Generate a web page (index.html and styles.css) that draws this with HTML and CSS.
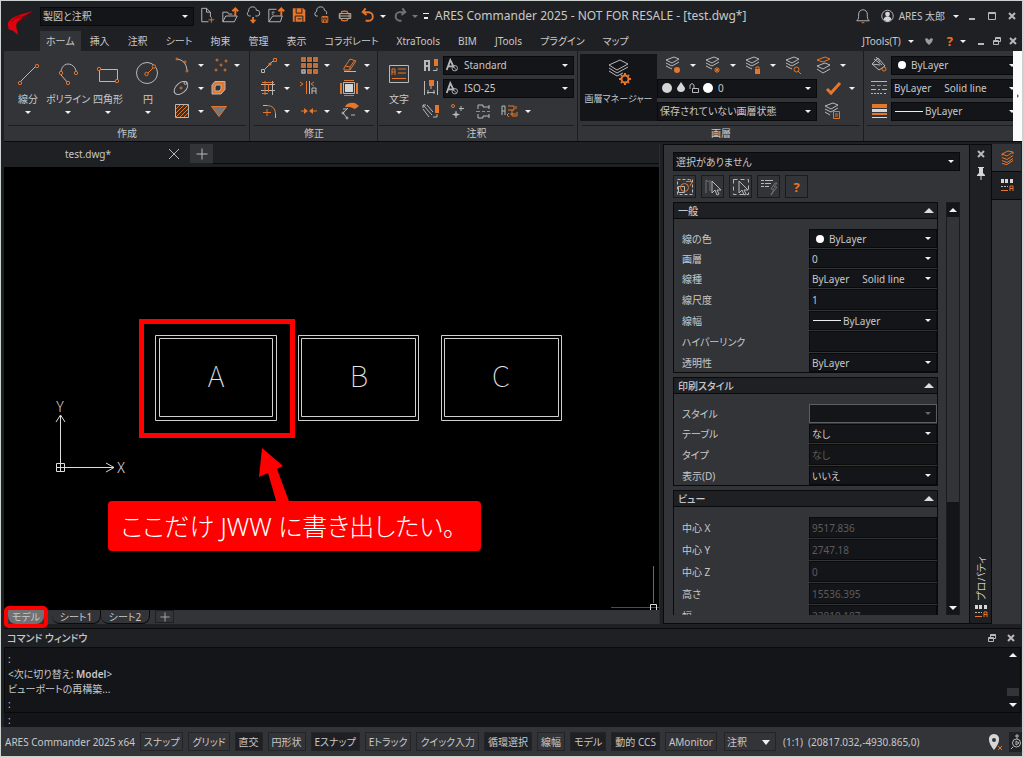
FILE: index.html
```html
<!DOCTYPE html>
<html lang="ja">
  <head>
    <meta charset="UTF-8" />
    <meta name="viewport" content="width=device-width, initial-scale=1.0" />
    <title>ARES Commander 2025</title>
    <link rel="stylesheet" href="styles.css">
  </head>
  <body>
    <!-- icon sprite -->
    <svg class="sprite" aria-hidden="true">
      <symbol id="i-new" viewBox="0 0 24 22"><path class="w" d="M15 12V7l-4-4H6v14h7M11 3v4h4"/><path class="o" d="M16 12v6M13 15h6"/></symbol>
      <symbol id="i-open" viewBox="0 0 24 22"><path class="w" d="M4 17V7h5l1 2h4M4 17h12l3-6H7l-3 6M17 11V9"/><path class="o b" d="M17 11V4M14 6l3-3 3 3"/></symbol>
      <symbol id="i-cloud" viewBox="0 0 24 22"><path class="w" d="M9 11H7a3 3 0 0 1 0-5 4 4 0 0 1 8-1 3 3 0 0 1 1 6h-2"/><path class="o b" d="M11.500 12v5"/><path class="of" d="M8 15h7l-3.500 4z"/></symbol>
      <symbol id="i-recent" viewBox="0 0 24 22"><path class="w" d="M4 17V4h8M4 17h12l2-6H8l-4 6M7 7h3M7 9h2"/><path class="o b" d="M17 11V4M14 6l3-3 3 3"/></symbol>
      <symbol id="i-save" viewBox="0 0 24 22"><path class="of" d="M5 3h11l2 2v12H5z"/><path class="d" d="M8.500 3v5h6V3M7.500 17v-6h8v6M10 14h4"/></symbol>
      <symbol id="i-cloudsave" viewBox="0 0 24 22"><path class="w" d="M7 11H5a3 3 0 0 1 1-5 4 4 0 0 1 8-1 3 3 0 0 1 2 4"/><path class="o" d="M11.500 11.500h6v6h-6zM13 11v2h3v-2M13 18v-3h3v3"/></symbol>
      <symbol id="i-print" viewBox="0 0 24 22"><circle class="o" cx="11" cy="11" r="5"/><path class="w" d="M5.500 8.500h12v5h-12zM6 11h11"/><path class="o" d="M8 8.500V6h6v2.500M8 13.500V16h6v-2.500"/></symbol>
      <symbol id="i-undo" viewBox="0 0 24 22"><path class="o b" d="M9 3L6 7l4 3M6 7h6a4 4 0 0 1 0 9H9"/></symbol>
      <symbol id="i-redo" viewBox="0 0 24 22"><path class="g b" d="M14 3l3 4-4 3M17 7h-5a4 4 0 0 0-1 9h2"/></symbol>
      <symbol id="i-bell" viewBox="0 0 24 22"><path class="w" d="M6 16c2-2 2-3 2-7a4.500 4.500 0 0 1 9 0c0 4 0 5 2 7z"/><path class="o" d="M11 18h3"/></symbol>
      <symbol id="i-user" viewBox="0 0 24 22"><circle class="w" cx="12" cy="11" r="6"/><circle class="wf" cx="12" cy="9" r="2.500"/><path class="wf" d="M8 15c0-5 8-5 8 0l-4 2z"/></symbol>
      <symbol id="i-min" viewBox="0 0 12 12"><path class="w b" d="M3 9h6"/></symbol>
      <symbol id="i-max" viewBox="0 0 12 12"><path class="w" d="M2.500 2.500h7v7h-7zM2.500 3.500h7"/></symbol>
      <symbol id="i-restore" viewBox="0 0 12 12"><path class="w" d="M2.500 5.500h5v4h-5zM4.500 5V2.500h5v4H8M4.500 3.500h5M2.500 6.500h5"/></symbol>
      <symbol id="i-x" viewBox="0 0 12 12"><path class="w b" d="M3 3l6 6M9 3L3 9"/></symbol>
      <symbol id="i-chev" viewBox="0 0 12 12"><path class="gf" d="M2 4l2-1 2 2 2-2 2 1-1 3-3 3-3-3z"/></symbol>

      <symbol id="i-line" viewBox="0 0 32 32"><path class="w" d="M8 25L24 9"/><circle class="n" cx="8" cy="26" r="1.700"/><circle class="n" cx="25" cy="9" r="1.700"/></symbol>
      <symbol id="i-poly" viewBox="0 0 32 32"><path class="w" d="M16 26l-7-8c-1-5 2-11 7-11s9 5 8 10"/><circle class="n" cx="9" cy="16" r="1.700"/><circle class="n" cx="24" cy="16" r="1.700"/><circle class="n" cx="16" cy="26" r="1.700"/></symbol>
      <symbol id="i-rect" viewBox="0 0 32 32"><path class="w" d="M7.500 12.500h18v12h-18z"/><circle class="n" cx="7" cy="12" r="1.700"/><circle class="n" cx="25" cy="24" r="1.700"/></symbol>
      <symbol id="i-circle" viewBox="0 0 32 32"><circle class="w" cx="15" cy="16" r="10.500"/><path class="o" d="M15 17l7-7"/><circle class="n" cx="14.500" cy="17" r="1.700"/><circle class="n" cx="22" cy="9.500" r="1.700"/></symbol>
      <symbol id="i-mtext" viewBox="0 0 32 32"><path class="w" d="M6.500 8.500h19v17h-19z"/><path class="o" d="M9 18v-6h3v6M9 15h3M15 12h8M15 16h8M9 21.500h14"/></symbol>
      <symbol id="i-layers-gear" viewBox="0 0 32 32"><path class="w" d="M6 8l11-5 8 4-11 6zM6 11l8 5 11-6M6 14l8 5 6-3"/><circle class="o b" cx="22" cy="22" r="3.500"/><path class="o b" d="M22 16v2M22 26v2M16 22h2M26 22h2M18 18l1 1M25 25l1 1M18 26l1-1M25 19l1-1"/></symbol>

      <symbol id="i-arc" viewBox="0 0 24 22"><path class="w" d="M7 5q9 1 10 11"/><circle class="n" cx="7" cy="5" r="1"/><circle class="n" cx="15" cy="8" r="1"/><circle class="n" cx="17" cy="17" r="1"/></symbol>
      <symbol id="i-ellipse" viewBox="0 0 24 22"><ellipse class="w" cx="11" cy="11" rx="8" ry="5" transform="rotate(-42 11 11)"/><circle class="n" cx="11" cy="11" r="1"/><circle class="w" cx="15.500" cy="6" r="1.500"/></symbol>
      <symbol id="i-hatch" viewBox="0 0 24 22"><path class="o" d="M6 9l4-4M6 13l8-8M6 17L18 5M10 17l8-8M14 17l4-4"/><path class="w" d="M5.500 4.500h13v13h-13z"/></symbol>
      <symbol id="i-points" viewBox="0 0 24 22"><circle class="n" cx="11" cy="6" r="1"/><circle class="n" cx="20" cy="7" r="1"/><circle class="n" cx="15" cy="11" r="1"/><circle class="n" cx="10" cy="16" r="1"/><circle class="n" cx="19" cy="16" r="1"/></symbol>
      <symbol id="i-region" viewBox="0 0 24 22"><path class="of" fill-rule="evenodd" d="M9 4h10v9l-4 4H6V8zM10 8L9 10v4h4l2-2V8z"/><path class="w" d="M9 4.500h10v8l-4 4.500H6V8zM10 8l-1 2v4h4l2-2V8z"/></symbol>
      <symbol id="i-wipe" viewBox="0 0 24 22"><path class="o grey" d="M5.500 6.500h15L13 16.500z"/></symbol>

      <symbol id="i-move" viewBox="0 0 24 22"><path class="w" d="M5.500 15.500h3v3h-3zM9 15l8-8"/><path class="o" d="M17.500 4.500h3v3h-3z"/><circle class="of" cx="14" cy="10" r="1.500"/></symbol>
      <symbol id="i-array" viewBox="0 0 24 22"><path fill="#77716c" d="M5 3h17v17H5z"/><path class="o" d="M6 4h3v3H6zM12 4h3v3h-3zM18 4h3v3h-3zM6 10h3v3H6zM12 10h3v3h-3zM18 10h3v3h-3zM12 16h3v3h-3zM18 16h3v3h-3z"/><path class="w" d="M6 16h3v3H6z"/><path class="d" d="M10.500 3v17M16.500 3v17M5 8.500h17M5 14.500h17"/></symbol>
      <symbol id="i-erase" viewBox="0 0 24 22"><path class="o" d="M8 14l6-9 6 2-6 9H8zM9 12l5 1 5-7M14 13v3"/><path class="w" d="M8 17.500h12"/></symbol>
      <symbol id="i-trim" viewBox="0 0 24 22"><path class="w" d="M5 7.500h14M5 13.500h14M16.500 4v14"/><path class="o" d="M9 4v14M6 5.500h12M6 16.500h6M12.500 7v8"/></symbol>
      <symbol id="i-mirror" viewBox="0 0 24 22"><path class="o" d="M4 5l3 2-3 2M10.500 4v13M18 5l-3 2 3 2"/><path class="w" d="M13.500 4v13M16 17v-6h4v6M16 14h4"/></symbol>
      <symbol id="i-scale" viewBox="0 0 24 22"><path class="wf" d="M9 7h8v8H9z"/><path class="o b" d="M5 6v11M21 6v11"/><path class="o" d="M8 3.500h10M8 18.500h10"/><path class="w" d="M7.500 5.500h11v11h-11z"/></symbol>
      <symbol id="i-fillet" viewBox="0 0 24 22"><path class="w" d="M7 5.500h4M19.500 13v5"/><path class="o" d="M11 5.500q8 0 8.500 8M7 12.500h8M11 9v7"/></symbol>
      <symbol id="i-join" viewBox="0 0 24 22"><path class="o" d="M5 11h5M15 11h6"/><path class="of" d="M8 8l4 3-4 3zM17 8l-4 3 4 3z"/></symbol>
      <symbol id="i-explode" viewBox="0 0 24 22"><path class="of" d="M9 7q2-5 10-4l4 3-4 3-5-2z"/><path class="w" d="M12 8l-5 5 4 5M15 15h4M7 9h4"/><circle class="w" cx="7" cy="13" r="1"/><circle class="w" cx="11" cy="18" r="1"/></symbol>

      <symbol id="i-tstyle" viewBox="0 0 24 22"><path class="w b" d="M6 17V7h4v10M6 12h4"/><path class="of" d="M15 5h4v7h-4z"/><path class="w" d="M14 16.500h4V14"/></symbol>
      <symbol id="i-dimstyle" viewBox="0 0 24 22"><path class="of" d="M10 3h5v6h-5z"/><path class="w" d="M5.500 4v14M18.500 4v14M8 15.500h8M9 13v4M15 13v4M12 9v3"/></symbol>
      <symbol id="i-leader" viewBox="0 0 24 22"><path class="w" d="M4 5l9 10M8 5l6 7M4 9l6 8M4 5h3M4 5v3"/><path class="of" d="M16 5h4v8h-4z"/><path class="w" d="M14 17h4v-3"/></symbol>
      <symbol id="i-center" viewBox="0 0 24 22"><circle class="n" cx="8" cy="6" r="1.500"/><path class="w" d="M16 6v5M14 8.500h5M11 11v7M7.500 14.500h7"/><circle class="w" cx="11" cy="14.500" r="1.500"/></symbol>
      <symbol id="i-break" viewBox="0 0 24 22"><path class="w" d="M7 9V5h5v2h6V5M7 14v4h5v-2h6v2M18 9V7M18 14v2"/><path class="o" d="M5 11.500h4M11 11.500h3M16 11.500h3"/></symbol>
      <symbol id="i-annot" viewBox="0 0 24 22"><path class="w" d="M5 15V6h3v9M5 11h3"/><path class="o" d="M11 6h6v4h-6M13 14h6M19 6v3M15 10v6h5v-4M12 13l-2 2 2 2"/></symbol>
      <symbol id="i-astyle" viewBox="0 0 20 16"><path class="w b" d="M3 13L7 2l4 8M5 9h4"/><circle class="w" cx="12" cy="11" r="3"/><path class="w" d="M10 9l4 4"/></symbol>

      <symbol id="i-ly-dot" viewBox="0 0 24 22"><path class="w" d="M4 6l8-3 5 2-7 4zM4 9l6 3 7-4M4 12l6 3"/><circle class="of" cx="15" cy="16" r="3"/></symbol>
      <symbol id="i-ly-freeze" viewBox="0 0 24 22"><path class="w" d="M4 6l8-3 5 2-7 4zM4 9l6 3 7-4M4 12l6 3"/><path class="o" d="M15 13v6M12 16h6M13 14l4 4M17 14l-4 4"/></symbol>
      <symbol id="i-ly-lock" viewBox="0 0 24 22"><path class="w" d="M4 6l8-3 5 2-7 4zM4 9l6 3 7-4M4 12l6 3"/><path class="of" d="M13 15h5v5h-5z"/><path class="o" d="M14 15v-2h3v2"/></symbol>
      <symbol id="i-ly-find" viewBox="0 0 24 22"><path class="w" d="M4 6l8-3 5 2-7 4zM4 9l6 3 7-4M4 12l6 3"/><circle class="o" cx="14.500" cy="15.500" r="2.500"/><path class="o" d="M16 17l3 3"/></symbol>
      <symbol id="i-ly-swap" viewBox="0 0 24 22"><path class="o" d="M5 6l8-3 5 2-7 3z"/><path class="w" d="M5 12l8-3 5 2-7 4zM5 15l6 4 7-4"/></symbol>
      <symbol id="i-check" viewBox="0 0 24 22"><path class="o bb" d="M6 12l4 4 9-10"/></symbol>
      <symbol id="i-ly-list" viewBox="0 0 24 22"><path class="w" d="M4 6l8-3 5 2-7 4zM4 9l6 3 7-4M4 12l5 3"/><path class="o" d="M12.500 11.500h6v7h-6zM14 14h3M14 16h3"/></symbol>
      <symbol id="i-paint" viewBox="0 0 24 22"><path class="w" d="M5 10l6-6 7 8-6 4zM5 10l8 1M9 3l4 5M7 5l8 6"/><circle class="o" cx="17" cy="15" r="2"/></symbol>
      <symbol id="i-ltype" viewBox="0 0 24 22"><path class="w" d="M4 4.500h16M4 12.500h5M11 12.500h2M15 12.500h5M4 16.500h2M7 16.500h2M10 16.500h2M13 16.500h2M17 16.500h2"/><path class="o" d="M4 8.500h4M10 8.500h4M16 8.500h4"/></symbol>
      <symbol id="i-lweight" viewBox="0 0 24 22"><path class="of" d="M5 4h15v4H5zM5 13h15v2H5z"/><path class="wf" d="M5 9h15v3H5zM5 17h15v1H5z"/></symbol>

      <symbol id="i-p-sel" viewBox="0 0 22 22"><path class="w" stroke-dasharray="3 2" d="M3.500 3.500h15v15h-15z"/><path class="w" d="M4.500 10.500h6v6h-6z"/><circle class="o" cx="10.500" cy="11.500" r="4"/><path class="o" d="M12 5.500h5M15 3l3 3-2 4"/></symbol>
      <symbol id="i-p-cursor" viewBox="0 0 22 22"><path class="g" d="M4 17V4l3 2M8 15V4"/><path class="w" d="M10 5v12l3-3 2 5 2-1-2-4h4z"/></symbol>
      <symbol id="i-p-window" viewBox="0 0 22 22"><path class="w" stroke-dasharray="4 3" d="M3.500 3.500h15v15h-15z"/><path class="w solid" d="M9 5v12l3-3 2 5 2-1-2-4h4z"/></symbol>
      <symbol id="i-p-quick" viewBox="0 0 22 22"><path class="w" d="M3 4.500h3M7 4.500h8M3 7.500h3M7 7.500h6M3 10.500h3M7 10.500h4"/><path class="g" d="M17 7l-4 6h3l-3 6 6-8h-3l3-4z"/></symbol>
      <symbol id="i-pin" viewBox="0 0 12 16"><path class="wf" d="M3 2h6v1H8v5l2 2v1H2v-1l2-2V3H3zM5.500 11h1v4h-1z"/></symbol>
      <symbol id="i-dock-layers" viewBox="0 0 22 22"><path class="o" d="M6 7l6-3 5 1-6 4zM6 10.500l5 2 6-4M6 7v1.500M17 5v2M6 13.500l5 2 6-4M6 16.500l5 1 6-4"/></symbol>
      <symbol id="i-dock-props" viewBox="0 0 22 22"><path class="wf" d="M5 4h3v4H5zM9 4h3v4H9zM14 4h3v4h-3z"/><path class="w" d="M5 11.500h2M8 11.500h2M11 11.500h1"/><path class="o" d="M5 15.500h7M14 16v-5h3v5M14 13.500h3"/></symbol>
      <symbol id="i-place" viewBox="0 0 20 20"><path class="wf" fill-rule="evenodd" d="M9 2a5 5 0 0 0-5 6c0 4 5 10 5 10s5-6 5-10a5 5 0 0 0-5-6zM9 6a2 2 0 1 1 0 4 2 2 0 0 1 0-4z"/><path class="o" d="M13 14l4 4M17 14l-4 4"/></symbol>
      <symbol id="i-gauge" viewBox="0 0 13 20"><circle class="w" cx="7.500" cy="11" r="4"/><path class="w" d="M8 2v5M6 4h4M7 13V9l3 2-3 2M4 15l-2 2"/></symbol>
      <symbol id="i-plus" viewBox="0 0 12 12"><path class="w" d="M6 .500v11M.500 6h11"/></symbol>
    </svg>

    <header class="top">
      <svg class="logo" viewBox="0 0 28 28"><path fill="#e00010" d="M28 1L14 5C4 8 0 13 1 17l1 4 4 1 6 5-2-9c-1-5 6-10 18-17z"/><path stroke="#7c0008" fill="none" d="M26 3L13 9M23 7L10 14M14 6L5 12"/></svg>
      <div class="titlebar">
        <div class="combo workspace"><select aria-label="ワークスペース"><option>製図と注釈</option></select></div>
        <div class="quick">
          <button aria-label="新規"><svg><use href="#i-new"/></svg></button>
          <button aria-label="開く"><svg><use href="#i-open"/></svg></button>
          <button aria-label="クラウド"><svg><use href="#i-cloud"/></svg></button>
          <button aria-label="最近のファイル"><svg><use href="#i-recent"/></svg></button>
          <button aria-label="保存"><svg><use href="#i-save"/></svg></button>
          <button aria-label="クラウド保存"><svg><use href="#i-cloudsave"/></svg></button>
          <button aria-label="印刷"><svg><use href="#i-print"/></svg></button>
          <button class="drop" aria-label="元に戻す"><svg><use href="#i-undo"/></svg></button>
          <button class="drop off" aria-label="やり直し"><svg><use href="#i-redo"/></svg></button>
          <button class="more" aria-label="カスタマイズ"></button>
        </div>
        <h1>ARES Commander 2025 - NOT FOR RESALE - [test.dwg*]</h1>
        <div class="account">
          <button aria-label="通知"><svg><use href="#i-bell"/></svg></button>
          <button class="user drop"><svg><use href="#i-user"/></svg>ARES 太郎</button>
        </div>
        <div class="win">
          <button aria-label="最小化"><svg><use href="#i-min"/></svg></button>
          <button aria-label="最大化"><svg><use href="#i-max"/></svg></button>
          <button aria-label="閉じる"><svg><use href="#i-x"/></svg></button>
        </div>
      </div>
      <nav class="tabs">
        <button class="active">ホーム</button>
        <button>挿入</button>
        <button>注釈</button>
        <button>シート</button>
        <button>拘束</button>
        <button>管理</button>
        <button>表示</button>
        <button>コラボレート</button>
        <button>XtraTools</button>
        <button>BIM</button>
        <button>JTools</button>
        <button>プラグイン</button>
        <button>マップ</button>
        <div class="tabs-right">
          <button class="drop">JTools(T)</button>
          <button aria-label="折りたたむ"><svg><use href="#i-chev"/></svg></button>
          <button class="drop help">?</button>
          <button aria-label="最小化"><svg><use href="#i-min"/></svg></button>
          <button aria-label="元に戻す"><svg><use href="#i-restore"/></svg></button>
          <button aria-label="閉じる"><svg><use href="#i-x"/></svg></button>
        </div>
      </nav>
    </header>

    <div class="ribbon">
      <section class="group g-draw">
        <div class="tools">
          <button class="big"><svg><use href="#i-line"/></svg>線分</button>
          <button class="big"><svg><use href="#i-poly"/></svg>ポリライン</button>
          <button class="big"><svg><use href="#i-rect"/></svg>四角形</button>
          <button class="big"><svg><use href="#i-circle"/></svg>円</button>
          <div class="small-grid">
            <button class="tool drop"><svg><use href="#i-arc"/></svg></button>
            <button class="tool drop"><svg><use href="#i-points"/></svg></button>
            <button class="tool drop"><svg><use href="#i-ellipse"/></svg></button>
            <button class="tool"><svg><use href="#i-region"/></svg></button>
            <button class="tool drop"><svg><use href="#i-hatch"/></svg></button>
            <button class="tool"><svg><use href="#i-wipe"/></svg></button>
          </div>
        </div>
        <h2>作成</h2>
      </section>

      <section class="group g-edit">
        <div class="tools">
          <div class="small-grid three">
            <button class="tool drop"><svg><use href="#i-move"/></svg></button>
            <button class="tool drop"><svg><use href="#i-array"/></svg></button>
            <button class="tool drop"><svg><use href="#i-erase"/></svg></button>
            <button class="tool drop"><svg><use href="#i-trim"/></svg></button>
            <button class="tool"><svg><use href="#i-mirror"/></svg></button>
            <button class="tool drop"><svg><use href="#i-scale"/></svg></button>
            <button class="tool drop"><svg><use href="#i-fillet"/></svg></button>
            <button class="tool drop"><svg><use href="#i-join"/></svg></button>
            <button class="tool drop"><svg><use href="#i-explode"/></svg></button>
          </div>
        </div>
        <h2>修正</h2>
      </section>

      <section class="group g-note">
        <div class="tools">
          <button class="big"><svg><use href="#i-mtext"/></svg>文字</button>
          <div class="rows">
            <div class="row">
              <button class="tool"><svg><use href="#i-tstyle"/></svg></button>
              <div class="combo"><svg class="ic"><use href="#i-astyle"/></svg><select aria-label="文字スタイル"><option>Standard</option></select></div>
            </div>
            <div class="row">
              <button class="tool"><svg><use href="#i-dimstyle"/></svg></button>
              <div class="combo"><svg class="ic"><use href="#i-astyle"/></svg><select aria-label="寸法スタイル"><option>ISO-25</option></select></div>
            </div>
            <div class="row spaced">
              <button class="tool"><svg><use href="#i-leader"/></svg></button>
              <button class="tool"><svg><use href="#i-center"/></svg></button>
              <button class="tool"><svg><use href="#i-break"/></svg></button>
              <button class="tool drop"><svg><use href="#i-annot"/></svg></button>
            </div>
          </div>
        </div>
        <h2>注釈</h2>
      </section>

      <section class="group g-layer">
        <div class="tools">
          <button class="big manager"><svg><use href="#i-layers-gear"/></svg>画層マネージャー</button>
          <div class="rows">
            <div class="row icons">
              <button class="tool drop"><svg><use href="#i-ly-dot"/></svg></button>
              <button class="tool drop"><svg><use href="#i-ly-freeze"/></svg></button>
              <button class="tool drop"><svg><use href="#i-ly-lock"/></svg></button>
              <button class="tool"><svg><use href="#i-ly-find"/></svg></button>
              <button class="tool drop"><svg><use href="#i-ly-swap"/></svg></button>
            </div>
            <div class="row">
              <div class="combo wide">
                <svg class="states" viewBox="0 0 58 16"><circle class="wf" cx="9" cy="8" r="5"/><path class="wf" d="M23 2l4 6a4 4 0 1 1-8 0z"/><path class="w" d="M32 9V5q2-3 4 0v3M34.500 8.500h6v4h-6z"/><circle fill="#fff" cx="50" cy="8" r="5"/></svg>
                <select aria-label="画層"><option>0</option></select>
              </div>
              <button class="tool drop"><svg><use href="#i-check"/></svg></button>
            </div>
            <div class="row">
              <div class="combo wide"><select aria-label="画層状態"><option>保存されていない画層状態</option></select></div>
              <button class="tool"><svg><use href="#i-ly-list"/></svg></button>
            </div>
          </div>
        </div>
        <h2>画層</h2>
      </section>

      <section class="group g-prop">
        <div class="tools">
          <div class="rows">
            <div class="row">
              <button class="tool"><svg><use href="#i-paint"/></svg></button>
              <div class="combo edge"><span class="dot"></span><select aria-label="線の色"><option>ByLayer</option></select></div>
            </div>
            <div class="row">
              <button class="tool"><svg><use href="#i-ltype"/></svg></button>
              <div class="combo edge"><select aria-label="線種"><option>ByLayer &nbsp; &nbsp; Solid line</option></select></div>
            </div>
            <div class="row">
              <button class="tool"><svg><use href="#i-lweight"/></svg></button>
              <div class="combo edge"><span class="dash"></span><select aria-label="線幅"><option>ByLayer</option></select></div>
            </div>
          </div>
        </div>
        <h2>&nbsp;</h2>
      </section>
      <button class="ribbon-more" aria-label="続き"></button>
    </div>

    <main class="work">
      <div class="document">
        <div class="doc-tabs">
          <div class="doc-tab"><span>test.dwg*</span><button aria-label="閉じる"><svg viewBox="0 0 12 12"><path class="w" d="M1 1l10 10M11 1L1 11"/></svg></button></div>
          <button class="add" aria-label="新規図面"><svg><use href="#i-plus"/></svg></button>
        </div>

        <div class="canvas">
          <svg class="drawing" width="656" height="443" viewBox="0 0 656 443">
            <g class="frame">
              <path d="M151.500 168.500h121v85h-121zM155.500 171.500h113v78h-113z"/>
              <path d="M294.500 168.500h120v85h-120zM297.500 171.500h114v78h-114z"/>
              <path d="M437.500 168.500h120v85h-120zM440.500 171.500h114v78h-114z"/>
            </g>
            <g class="cad">
              <text x="212" y="220">A</text>
              <text x="355" y="220">B</text>
              <text x="497" y="220">C</text>
            </g>
            <g class="ucs">
              <path d="M56.500 300V248M52 255l4.500-7 4.500 7M56 300.500h54M102 296l8 4.500-8 4.500M52.500 296.500h8v8h-8zM52 300.500h8M56.500 296v8"/>
              <text x="56" y="245">Y</text>
              <text x="117" y="306">X</text>
            </g>
          </svg>
          <div class="highlight"></div>
          <svg class="pointer" width="36" height="56" viewBox="0 0 36 56"><path fill="#f00" d="M8 0l21 18-6 3 13 35h-13L14 25l-9 4z"/></svg>
          <p class="callout">ここだけ JWW に書き出したい。</p>
          <svg class="cursor" width="48" height="44" viewBox="0 0 48 44"><path stroke="#00b400" d="M42.500 0v37"/><path stroke="#f00" d="M0 41.500h48"/><path stroke="#ddd" fill="none" d="M39.500 44v-5.500h6V44"/></svg>
        </div>

        <div class="sheets">
          <button class="sheet active">モデル</button>
          <button class="sheet">シート1</button>
          <button class="sheet">シート2</button>
          <button class="add" aria-label="シート追加"><svg><use href="#i-plus"/></svg></button>
        </div>
      </div>

      <aside class="palette">
        <div class="combo target"><select aria-label="選択"><option>選択がありません</option></select></div>
        <div class="palette-tools">
          <button><svg><use href="#i-p-sel"/></svg></button>
          <button><svg><use href="#i-p-cursor"/></svg></button>
          <button><svg><use href="#i-p-window"/></svg></button>
          <button><svg><use href="#i-p-quick"/></svg></button>
          <button class="help">?</button>
        </div>
        <div class="palette-body">
          <div class="props">
            <section>
              <h3>一般</h3>
              <div class="fields">
                <label for="p1">線の色</label><div class="combo"><span class="dot"></span><select id="p1"><option>ByLayer</option></select></div>
                <label for="p2">画層</label><div class="combo"><select id="p2"><option>0</option></select></div>
                <label for="p3">線種</label><div class="combo"><select id="p3"><option>ByLayer &nbsp; &nbsp; Solid line</option></select></div>
                <label for="p4">線尺度</label><input id="p4" value="1">
                <label for="p5">線幅</label><div class="combo"><span class="dash"></span><select id="p5"><option>ByLayer</option></select></div>
                <label for="p6">ハイパーリンク</label><input id="p6">
                <label for="p7">透明性</label><div class="combo"><select id="p7"><option>ByLayer</option></select></div>
              </div>
            </section>
            <section>
              <h3>印刷スタイル</h3>
              <div class="fields">
                <label for="s1">スタイル</label><div class="combo disabled"><select id="s1" disabled><option></option></select></div>
                <label for="s2">テーブル</label><div class="combo"><select id="s2"><option>なし</option></select></div>
                <label for="s3">タイプ</label><input id="s3" value="なし" disabled>
                <label for="s4">表示(D)</label><div class="combo"><select id="s4"><option>いいえ</option></select></div>
              </div>
            </section>
            <section>
              <h3>ビュー</h3>
              <div class="fields">
                <label for="v1">中心 X</label><input id="v1" value="9517.836" disabled>
                <label for="v2">中心 Y</label><input id="v2" value="2747.18" disabled>
                <label for="v3">中心 Z</label><input id="v3" value="0" disabled>
                <label for="v4">高さ</label><input id="v4" value="15536.395" disabled>
                <label for="v5">幅</label><input id="v5" value="22810.187" disabled>
              </div>
            </section>
          </div>
          <div class="scroll"><i class="up"></i><b></b><i class="down"></i></div>
        </div>
      </aside>

      <div class="palette-title">
        <button aria-label="閉じる"><svg class="s12"><use href="#i-x"/></svg></button>
        <button aria-label="固定"><svg class="pin"><use href="#i-pin"/></svg></button>
        <span>プロパティ</span>
        <svg class="s22"><use href="#i-dock-props"/></svg>
      </div>
      <div class="dock">
        <button aria-label="画層"><svg class="s22"><use href="#i-dock-layers"/></svg></button>
        <button class="active" aria-label="プロパティ"><svg class="s22"><use href="#i-dock-props"/></svg></button>
      </div>
    </main>

    <section class="command">
      <div class="command-title">
        <h2>コマンド ウィンドウ</h2>
        <button aria-label="元に戻す"><svg><use href="#i-restore"/></svg></button>
        <button aria-label="閉じる"><svg><use href="#i-x"/></svg></button>
      </div>
      <div class="log">
        <div class="lines">
          <p>:</p>
          <p>&lt;次に切り替え: <strong>Model</strong>&gt;</p>
          <p>ビューポートの再構築...</p>
          <p>:</p>
        </div>
        <div class="scroll"><i class="up"></i><b></b><i class="down"></i></div>
      </div>
      <label class="prompt">:<input aria-label="コマンド"></label>
    </section>

    <footer class="status">
      <span class="version">ARES Commander 2025 x64</span>
      <button>スナップ</button>
      <button>グリッド</button>
      <button class="on">直交</button>
      <button>円形状</button>
      <button class="on">Eスナップ</button>
      <button>Eトラック</button>
      <button>クイック入力</button>
      <button class="on">循環選択</button>
      <button>線幅</button>
      <button class="on">モデル</button>
      <button class="on">動的 CCS</button>
      <button>AMonitor</button>
      <div class="combo scale"><select aria-label="注釈尺度"><option>注釈</option></select></div>
      <span>(1:1)</span>
      <span>(20817.032,-4930.865,0)</span>
      <div class="status-right">
        <svg class="place"><use href="#i-place"/></svg>
        <svg class="gauge"><use href="#i-gauge"/></svg>
      </div>
    </footer>
  </body>
</html>
```
FILE: styles.css
```css
* {
  margin: 0;
  padding: 0;
  box-sizing: border-box;
}

:root {
  --frame: #1f2024;
  --panel: #333437;
  --field: #141518;
  --line: #0a0a0b;
  --text: #c8c8c8;
  --muted: #5b5c5f;
  --orange: #e5762a;
}

body {
  display: flex;
  flex-direction: column;
  height: 100vh;
  min-height: 600px;
  border: 1px solid #ccd2cf;
  border-right-width: 2px;
  background: var(--frame);
  color: var(--text);
  font-family: "Noto Sans", "Noto Sans CJK JP", sans-serif;
  font-size: 10px;
  line-height: 14px;
  font-feature-settings: "palt";
  overflow: hidden;
}

button,
select,
input {
  font: inherit;
  font-feature-settings: inherit;
  color: inherit;
  background: none;
  border: none;
  border-radius: 0;
  outline: none;
}

button {
  display: flex;
  align-items: center;
  justify-content: center;
  white-space: nowrap;
}

h1,
h2,
h3 {
  font-size: inherit;
  font-weight: normal;
}

svg {
  display: block;
  flex: none;
}

/* icon strokes */
.sprite {
  position: absolute;
  width: 0;
  height: 0;
}

.w, .o, .g, .d, .n {
  fill: none;
  stroke: #b8b8b8;
}

.o, .n {
  stroke: var(--orange);
}

.n {
  fill: var(--panel);
}

.g {
  stroke: #707174;
}

.d {
  stroke: var(--frame);
}

.b {
  stroke-width: 2;
}

.bb {
  stroke-width: 3;
}

.wf {
  fill: #d6d6d6;
}

.of {
  fill: var(--orange);
}

.gf {
  fill: #9b9c9e;
}

.grey {
  fill: #77787b;
}

.solid {
  fill: var(--panel);
}

/* drop-down arrow */
.drop::after,
.big::after,
.combo::after {
  content: "";
  flex: none;
  border: 3px solid transparent;
  border-top-color: #f0f0f0;
  border-bottom: none;
}

.combo {
  position: relative;
  display: flex;
  align-items: center;
  height: 19px;
  background: var(--field);
  border: 1px solid var(--line);
}

.combo::after {
  position: absolute;
  right: 5px;
  top: 7px;
  pointer-events: none;
}

.combo select {
  flex: 1;
  min-width: 0;
  height: 100%;
  padding: 0 2px;
  appearance: none;
}

.combo .ic {
  width: 18px;
  height: 15px;
}

.dot {
  width: 8px;
  height: 8px;
  margin: 0 3px 0 6px;
  border-radius: 50%;
  background: #fff;
}

.dash {
  width: 28px;
  height: 1px;
  margin-left: 3px;
  background: #eee;
}

/* header */
.top {
  display: grid;
  grid-template-columns: 39px 1fr;
  grid-template-rows: 30px 20px;
}

.logo {
  grid-row: 1 / 3;
  width: 26px;
  height: 26px;
  margin: 9px 0 0 6px;
}

.titlebar,
.tabs,
.quick,
.account,
.win,
.tabs-right {
  display: flex;
  align-items: center;
}

.workspace {
  width: 154px;
}

.quick {
  padding: 0 4px 0 2px;
}

.quick svg,
.account svg {
  width: 23px;
  height: 22px;
}

.quick .drop {
  width: 32px;
  justify-content: flex-start;
}

.quick .off::after {
  border-top-color: #777;
}

.quick .more {
  width: 10px;
  height: 8px;
}

.more::after {
  content: "";
  width: 6px;
  height: 5px;
  border-top: 1px solid #eee;
  background: linear-gradient(#eee, #eee) center bottom / 4px 2px no-repeat;
}

.titlebar h1 {
  flex: 1;
  font-size: 12px;
  line-height: 20px;
  white-space: nowrap;
}

.user {
  margin-left: 2px;
}

.user::after {
  margin-left: 8px;
}

.win {
  margin-left: 3px;
}

.win button {
  width: 20px;
}

.win svg,
.tabs-right svg {
  width: 12px;
  height: 12px;
}

.tabs {
  align-items: stretch;
}

.tabs > button {
  padding: 0 9px;
}

.tabs > .active {
  padding: 0 6px;
  background: var(--panel);
}

.tabs-right {
  flex: 1;
  justify-content: flex-end;
  gap: 4px;
  padding-right: 3px;
}

.tabs-right .drop::after {
  margin: 0 5px 0 7px;
}

.tabs-right .help {
  margin-left: 8px;
}

.help {
  color: var(--orange);
  font-size: 13px;
  font-weight: bold;
}

/* ribbon */
.ribbon {
  display: flex;
  height: 91px;
  margin: 0 0 2px 3px;
  background: var(--panel);
  border-bottom: 1px solid var(--line);
}

.group {
  display: flex;
  flex-direction: column;
  flex: none;
  padding: 3px 3px 0 4px;
  border-right: 1px solid #1c1d1f;
}

.group h2 {
  border-top: 1px solid #1c1d1f;
  text-align: center;
}

.tools {
  display: flex;
  height: 71px;
}

.big {
  flex-direction: column;
  justify-content: flex-start;
  width: 40px;
  height: 67px;
  padding-top: 3px;
}

.big svg {
  width: 32px;
  height: 32px;
  margin-bottom: 3px;
}

.big::after {
  margin-top: 5px;
}

.small-grid {
  display: grid;
  grid-template-columns: 36px 36px;
  grid-auto-rows: 22px;
  gap: 1px 0;
  align-content: start;
  padding-left: 2px;
}

.small-grid.three {
  grid-template-columns: 40px 40px 40px;
}

.tool {
  justify-content: flex-start;
  height: 22px;
}

.tool svg {
  width: 24px;
  height: 22px;
}

.tool.drop::after {
  margin-left: 4px;
}

.g-draw {
  width: 246px;
}

.g-edit {
  width: 128px;
}

.g-note {
  width: 200px;
  padding-left: 1px;
}

.g-layer {
  width: 286px;
}

.g-prop {
  flex: 1;
  min-width: 0;
  padding: 3px 0 0 3px;
  border-right: none;
}

.rows {
  display: flex;
  flex: 1;
  flex-direction: column;
  gap: 1px;
  min-width: 0;
}

.row {
  display: flex;
  align-items: center;
  height: 22px;
}

.spaced {
  gap: 2px;
}

.row .combo {
  flex: 1;
}

.row .combo.wide {
  flex: none;
  width: 160px;
  margin-right: 4px;
}

.row .combo.edge {
  border-right: none;
}

.combo.edge::after {
  right: -2px;
}

.icons {
  padding-left: 5px;
  gap: 6px;
}

.states {
  width: 58px;
  height: 16px;
}

.manager {
  width: 77px;
  background: var(--field);
  font-size: 9px;
}

.manager::after {
  display: none;
}

.g-layer .tools {
  margin-left: -2px;
}

.ribbon-more {
  width: 9px;
  background: #fbfbfb;
}

.ribbon-more::after {
  content: "";
  border: 2px solid transparent;
  border-left-color: #666;
  border-right: none;
}

/* work area */
.work {
  display: flex;
  flex: 1;
  min-height: 0;
  margin: 0 0 4px 3px;
}

.document {
  display: flex;
  flex: 1;
  flex-direction: column;
  min-width: 0;
  margin-right: 3px;
  border-right: 1px solid #2c2d30;
}

.doc-tabs {
  display: flex;
  align-items: flex-start;
  height: 23px;
  background: var(--frame);
}

.doc-tabs::after {
  content: "";
  flex: 1;
  height: 19px;
  border-bottom: 1px solid var(--line);
}

.doc-tab {
  display: flex;
  align-items: center;
  width: 186px;
  height: 19px;
  padding-right: 10px;
}

.doc-tab span {
  flex: 1;
  padding-left: 4px;
  text-align: center;
}

.doc-tab svg {
  width: 12px;
  height: 12px;
}

.add {
  width: 23px;
  height: 19px;
  background: var(--panel);
}

.add svg {
  width: 12px;
  height: 12px;
}

.canvas {
  position: relative;
  flex: 1;
  min-height: 0;
  background: #000;
  overflow: hidden;
}

.frame path {
  fill: none;
  stroke: #d0d0d0;
}

.cad text {
  fill: #e4e4e4;
  font-family: "Noto Sans CJK JP", sans-serif;
  font-size: 29px;
  font-weight: 100;
  text-anchor: middle;
}

.ucs path {
  fill: none;
  stroke: #ddd;
}

.ucs text {
  fill: #ddd;
  font-family: "Noto Sans CJK JP", sans-serif;
  font-size: 15px;
  font-weight: 300;
  text-anchor: middle;
}

.highlight {
  position: absolute;
  left: 135px;
  top: 152px;
  width: 156px;
  height: 119px;
  border: 5px solid #f00;
}

.pointer {
  position: absolute;
  left: 250px;
  top: 281px;
}

.callout {
  position: absolute;
  left: 104px;
  top: 334px;
  width: 373px;
  padding: 0 13px;
  border-radius: 4px;
  background: #f00;
  color: #fff;
  font-family: "Noto Sans", "Noto Sans CJK JP", sans-serif;
  font-size: 25px;
  font-weight: 300;
  line-height: 50px;
  white-space: nowrap;
}

.cursor {
  position: absolute;
  right: 0;
  bottom: 0;
}

.sheets {
  display: flex;
  height: 14px;
  padding-left: 4px;
  background: var(--panel);
}

.sheet {
  width: 49px;
  border-right: 1px solid var(--line);
  border-bottom: 1px solid var(--line);
  border-bottom-right-radius: 8px;
  border-bottom-left-radius: 8px;
}

.sheet.active {
  position: relative;
  width: 36px;
  margin-right: 8px;
  background: #707174;
  border: none;
}

.sheet.active::after {
  content: "";
  position: absolute;
  inset: -4px;
  border: 4px solid #f00;
  border-radius: 5px;
}

.sheets .add {
  width: 19px;
  height: 13px;
  margin-left: 5px;
  border: 1px solid var(--frame);
}

.sheets svg {
  width: 10px;
  height: 10px;
}

/* properties */
.palette {
  display: flex;
  flex-direction: column;
  width: 307px;
  padding: 7px 9px 8px;
  background: var(--panel);
  border: 1px solid var(--line);
}

.palette-tools {
  display: flex;
  gap: 5px;
  margin: 4px 0;
}

.palette-tools button {
  width: 23px;
  height: 23px;
  border: 1px solid #1a1b1d;
}

.palette-tools svg,
.s22 {
  width: 22px;
  height: 22px;
}

.palette-tools svg {
  margin: -1px;
}

.palette-body {
  display: flex;
  flex: 1;
  gap: 8px;
  min-height: 0;
}

.props {
  flex: 1;
  overflow: hidden;
}

.props section {
  margin-bottom: 4px;
  border: 1px solid var(--line);
}

.props h3 {
  display: flex;
  align-items: center;
  justify-content: space-between;
  height: 16px;
  padding: 0 3px 0 4px;
  background: var(--frame);
  border-bottom: 1px solid var(--line);
  font-weight: 500;
}

.props h3::after {
  content: "";
  border: 5px solid transparent;
  border-bottom-color: #ddd;
  border-top: none;
}

.fields {
  display: grid;
  grid-template-columns: 1fr 128px;
  gap: 1px 0;
  align-items: center;
  padding: 10px 0 0 8px;
}

.fields input {
  width: 100%;
  height: 21px;
  padding: 0 2px;
  background: var(--field);
  border: 1px solid var(--line);
}

.fields input:disabled {
  color: var(--muted);
}

.combo.disabled {
  border-color: #5d5e60;
}

.combo.disabled::after {
  border-top-color: #666;
}

.scroll {
  display: flex;
  flex-direction: column;
  align-items: center;
  width: 14px;
  background: var(--field);
  border: 1px solid #1a1b1d;
}

.scroll i {
  border: 4px solid transparent;
}

.scroll .up {
  margin: 5px 0;
  border-bottom-color: #f2f2f2;
  border-top: none;
}

.scroll .down {
  margin: auto 0 4px;
  border-top-color: #f2f2f2;
  border-bottom: none;
}

.scroll b {
  width: 12px;
  height: 285px;
  background: var(--panel);
}

.palette-title {
  display: flex;
  flex-direction: column;
  align-items: center;
  width: 22px;
  padding-top: 3px;
  border: 1px solid var(--line);
  border-left: none;
}

.s12 {
  width: 12px;
  height: 12px;
}

.pin {
  width: 12px;
  height: 16px;
  margin-top: 5px;
}

.palette-title span {
  margin-top: auto;
  writing-mode: vertical-rl;
  text-orientation: sideways;
  transform: rotate(180deg);
}

.dock {
  width: 29px;
  margin-right: 1px;
  background: var(--panel);
}

.dock button {
  width: 100%;
  height: 28px;
  border-bottom: 1px solid var(--line);
}

.dock .active {
  background: var(--frame);
}

/* command window */
.command {
  margin: 0 1px 0 3px;
  border-top: 1px solid var(--line);
}

.command-title {
  display: flex;
  align-items: center;
  height: 18px;
  padding: 0 4px 0 3px;
  gap: 7px;
}

.command-title h2 {
  flex: 1;
  font-weight: 500;
}

.command-title svg {
  width: 12px;
  height: 12px;
}

.log {
  display: flex;
  justify-content: space-between;
  height: 66px;
  background: var(--field);
  border: 1px solid var(--line);
}

.lines {
  padding: 4px 3px;
  line-height: 15px;
}

.lines strong {
  font-weight: 600;
}

.log .scroll {
  width: 15px;
  border: none;
}

.log .scroll b {
  width: 12px;
  height: 8px;
  margin-top: 26px;
}

.log .scroll .down {
  margin-bottom: 5px;
}

.prompt {
  display: flex;
  height: 14px;
  padding-left: 4px;
  background: var(--field);
}

.prompt input {
  flex: 1;
}

/* status bar */
.status {
  display: flex;
  align-items: center;
  gap: 5px;
  height: 29px;
  padding-left: 4px;
  background: var(--panel);
  white-space: nowrap;
}

.status button {
  height: 19px;
  padding: 0 3px;
  border: 1px solid #232427;
}

.status .on {
  background: var(--frame);
}

.scale {
  width: 52px;
  margin: 0 2px;
}

.status .scale {
  background: none;
  border-color: #232427;
}

.scale::after {
  border-width: 5px 4px 0;
}

.status-right {
  display: flex;
  align-items: center;
  gap: 4px;
  margin-left: auto;
}

.place {
  width: 20px;
  height: 20px;
}

.gauge {
  width: 13px;
  height: 20px;
  background: var(--frame);
}
```
